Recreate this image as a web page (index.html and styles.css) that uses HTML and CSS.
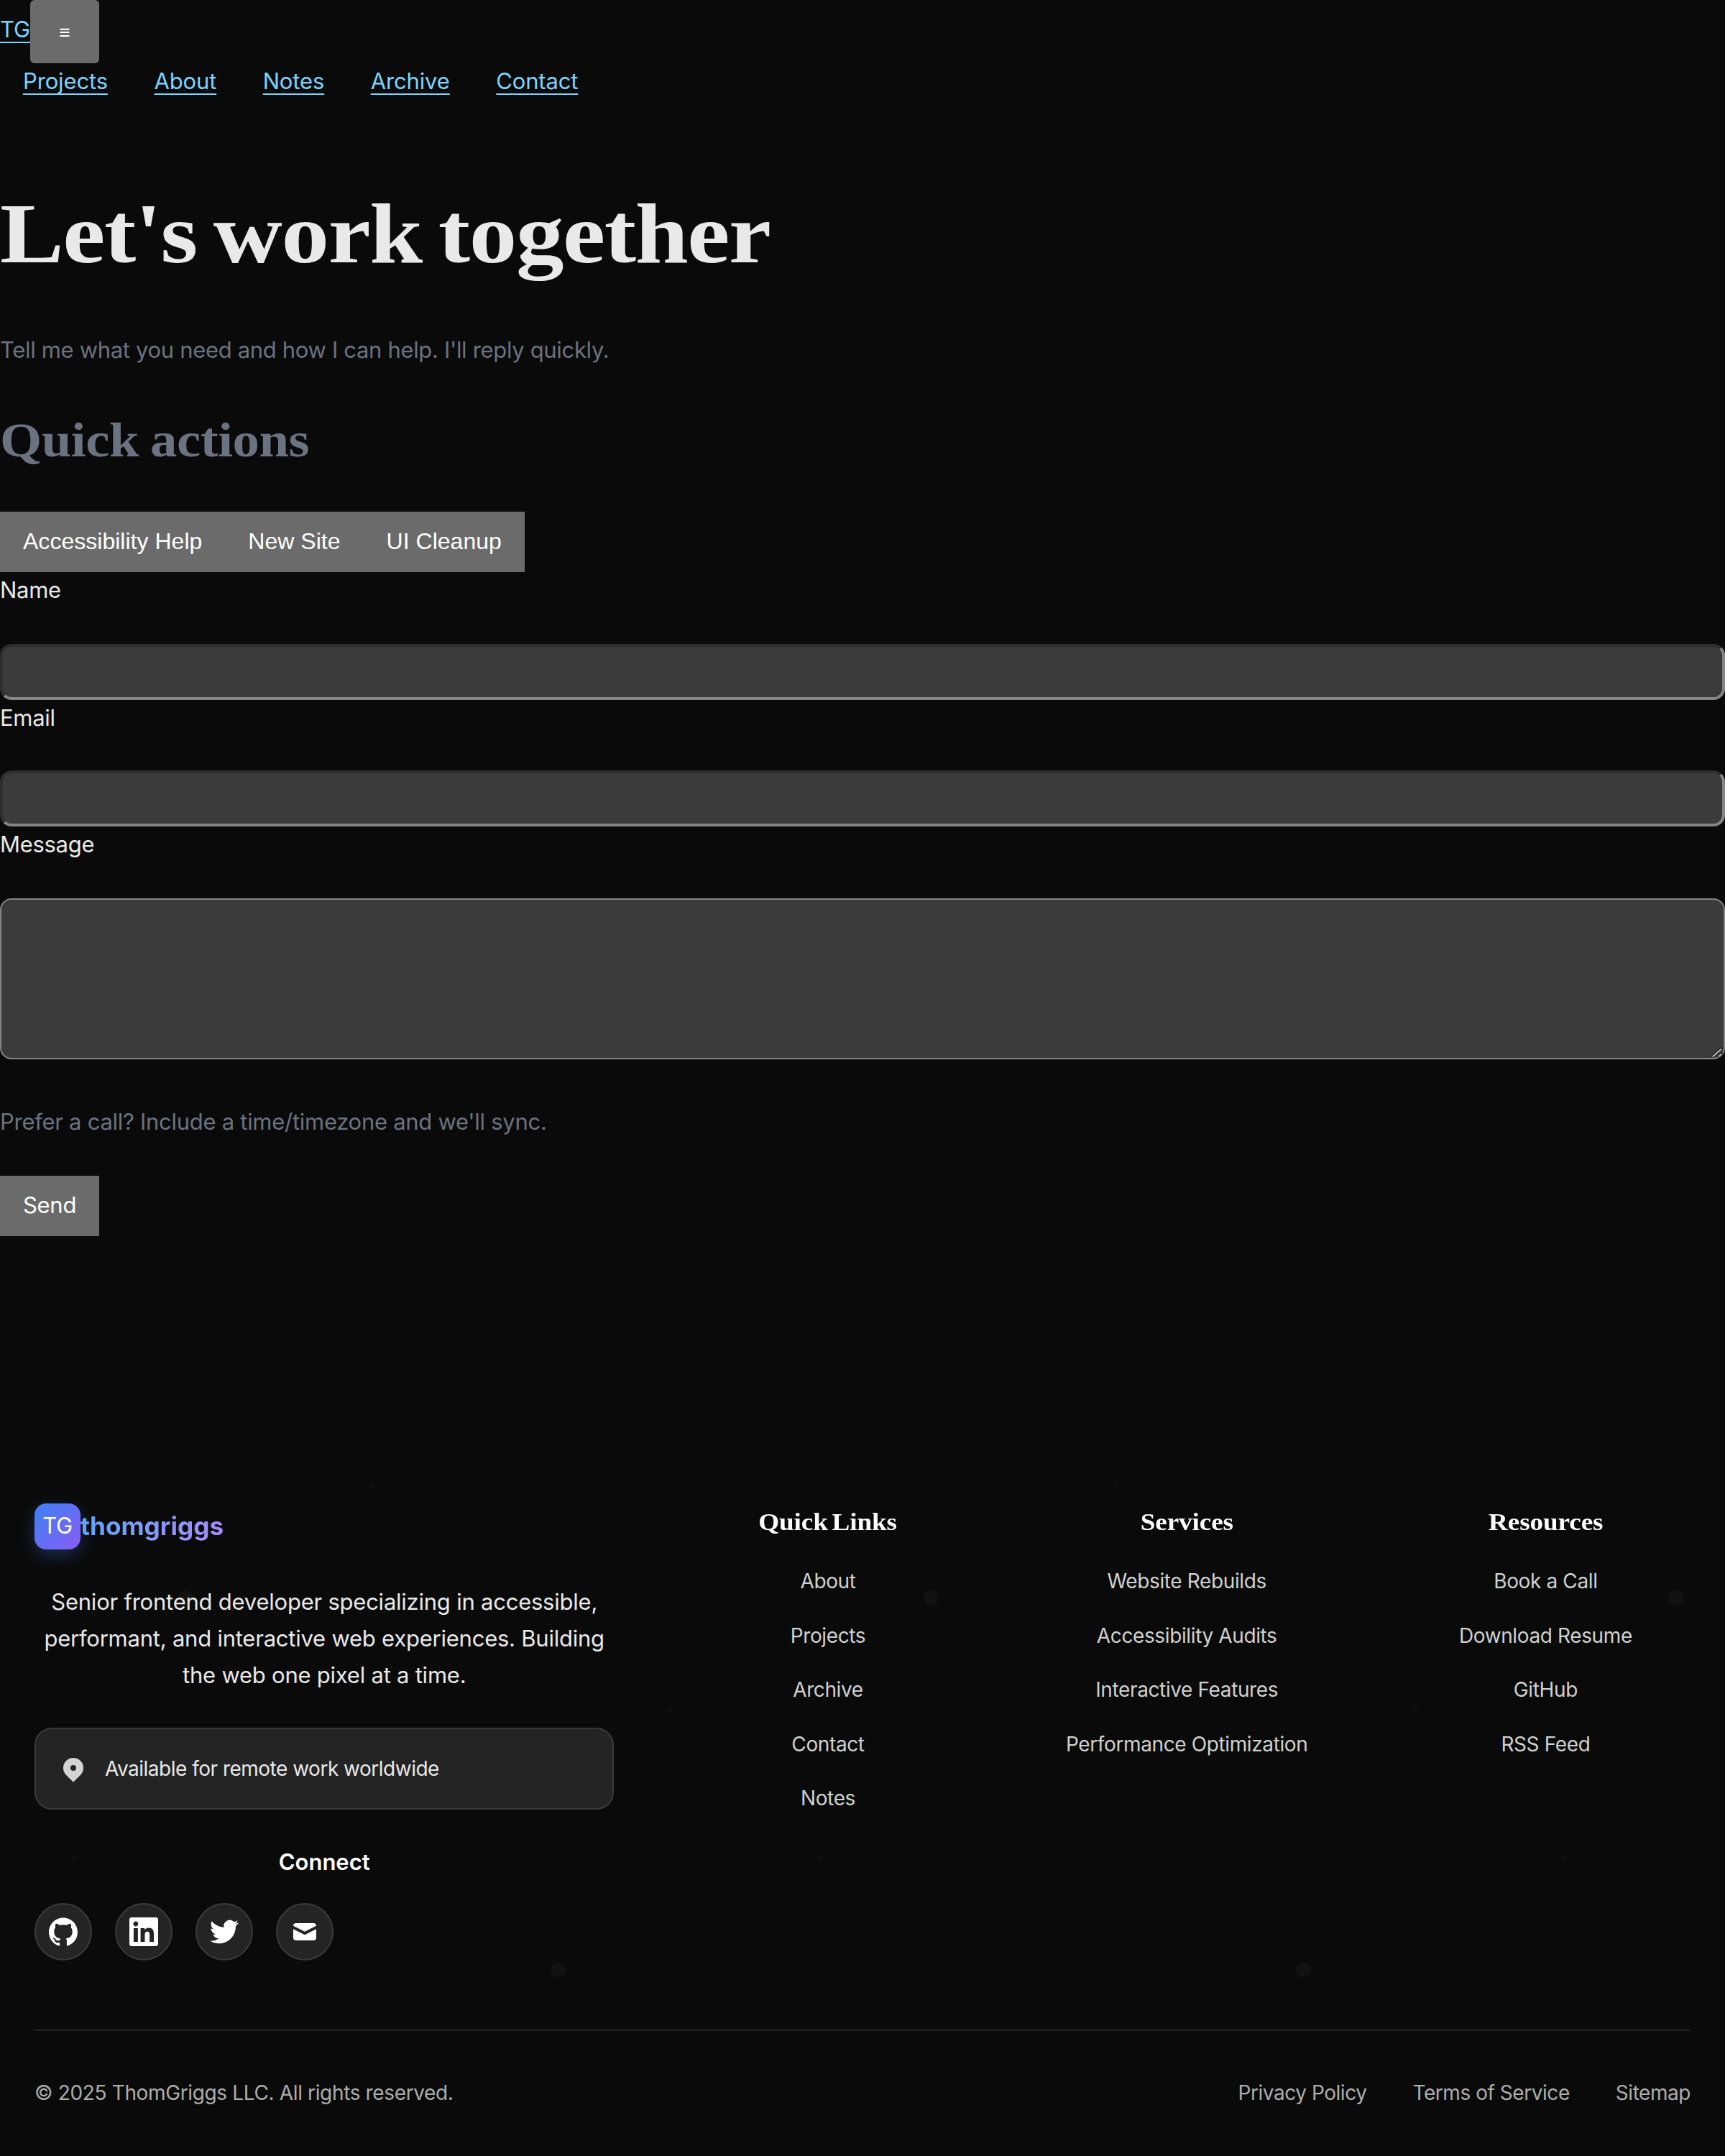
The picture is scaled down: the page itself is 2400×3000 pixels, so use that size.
FILE: index.html
```html
<!DOCTYPE html>
<html lang="en">
<head>
<meta charset="utf-8">
<title>Contact</title>
<link rel="stylesheet" href="styles.css">
</head>
<body>
<header class="header">
  <div class="brand-row">
    <a class="brand" href="#">TG</a>
    <button class="menu" type="button">≡</button>
  </div>
  <nav class="nav">
    <a href="#">Projects</a>
    <a href="#">About</a>
    <a href="#">Notes</a>
    <a href="#">Archive</a>
    <a href="#">Contact</a>
  </nav>
</header>

<main class="main">
  <h1 class="title"><span class="wide">Let's work together</span></h1>
  <p class="lead">Tell me what you need and how I can help. I'll reply quickly.</p>
  <h2 class="subtitle"><span class="wide">Quick actions</span></h2>
  <div class="actions">
    <button class="btn" type="button">Accessibility Help</button>
    <button class="btn" type="button">New Site</button>
    <button class="btn" type="button">UI Cleanup</button>
  </div>
  <form class="form">
    <label class="label" for="name">Name</label>
    <input class="input" id="name" type="text">
    <label class="label label-email" for="email">Email</label>
    <input class="input" id="email" type="email">
    <label class="label" for="message">Message</label>
    <div class="area">
      <textarea class="textarea" id="message"></textarea>
      <svg class="grip" viewBox="0 0 16 16"><path d="M1 14.500L14.500 2.500M9 15L15 9" stroke="#111" stroke-width="3.500"/><path d="M1.500 14.500L14 3.500M10 14.500L14 10.500" stroke="#c4c4c4" stroke-width="1.800"/></svg>
    </div>
    <p class="hint">Prefer a call? Include a time/timezone and we'll sync.</p>
    <button class="btn send" type="button">Send</button>
  </form>
</main>

<footer class="footer">
  <svg class="dots" width="2400" height="1037">
    <defs>
      <pattern id="grain" width="1036.400" height="1036.400" patternUnits="userSpaceOnUse">
        <g fill="#fff">
          <circle cx="259" cy="259" r="10.400" fill-opacity=".03"/>
          <circle cx="777" cy="777" r="10.400" fill-opacity=".03"/>
          <circle cx="518" cy="103.600" r="5.200" fill-opacity=".016"/>
          <circle cx="103.600" cy="621.600" r="5.200" fill-opacity=".016"/>
          <circle cx="932" cy="414.400" r="5.200" fill-opacity=".016"/>
        </g>
      </pattern>
    </defs>
    <rect width="2400" height="1036" fill="url(#grain)"/>
  </svg>
  <div class="grid">
    <section class="about">
      <div class="logo-row"><span class="logo">TG</span><span class="wordmark">thomgriggs</span></div>
      <p class="desc">Senior frontend developer specializing in accessible,<br>performant, and interactive web experiences. Building<br>the web one pixel at a time.</p>
      <div class="card">
        <svg class="pin" viewBox="0 0 20 20"><path fill="#d4d4d4" fill-rule="evenodd" d="M5.050 4.050a7 7 0 119.900 9.900L10 18.900l-4.950-4.950a7 7 0 010-9.900zM10 11a2 2 0 100-4 2 2 0 000 4z"/></svg>
        <span>Available for remote work worldwide</span>
      </div>
      <h4 class="connect">Connect</h4>
      <div class="social">
        <a href="#"><svg viewBox="0 0 24 24"><path d="M12 .297c-6.630 0-12 5.373-12 12 0 5.303 3.438 9.800 8.205 11.385.6.113.82-.258.82-.577 0-.285-.010-1.040-.015-2.040-3.338.724-4.042-1.610-4.042-1.610C4.422 18.070 3.633 17.700 3.633 17.700c-1.087-.744.084-.729.084-.729 1.205.084 1.838 1.236 1.838 1.236 1.070 1.835 2.809 1.305 3.495.998.108-.776.417-1.305.76-1.605-2.665-.3-5.466-1.332-5.466-5.930 0-1.310.465-2.380 1.235-3.220-.135-.303-.54-1.523.105-3.176 0 0 1.005-.322 3.300 1.230.96-.267 1.980-.399 3-.405 1.020.006 2.040.138 3 .405 2.280-1.552 3.285-1.230 3.285-1.230.645 1.653.24 2.873.12 3.176.765.84 1.230 1.910 1.230 3.220 0 4.610-2.805 5.625-5.475 5.920.42.36.81 1.096.81 2.220 0 1.606-.015 2.896-.015 3.286 0 .315.21.69.825.57C20.565 22.092 24 17.592 24 12.297c0-6.627-5.373-12-12-12"/></svg></a>
        <a href="#"><svg viewBox="0 0 24 24"><path d="M20.447 20.452h-3.554v-5.569c0-1.328-.027-3.037-1.852-3.037-1.853 0-2.136 1.445-2.136 2.939v5.667H9.351V9h3.414v1.561h.046c.477-.9 1.637-1.850 3.370-1.850 3.601 0 4.267 2.370 4.267 5.455v6.286zM5.337 7.433c-1.144 0-2.063-.926-2.063-2.065 0-1.138.92-2.063 2.063-2.063 1.140 0 2.064.925 2.064 2.063 0 1.139-.925 2.065-2.064 2.065zm1.782 13.019H3.555V9h3.564v11.452zM22.225 0H1.771C.792 0 0 .774 0 1.729v20.542C0 23.227.792 24 1.771 24h20.451C23.200 24 24 23.227 24 22.271V1.729C24 .774 23.200 0 22.222 0h.003z"/></svg></a>
        <a href="#"><svg viewBox="0 0 24 24"><path d="M23.953 4.570a10 10 0 01-2.825.775 4.958 4.958 0 002.163-2.723c-.951.555-2.005.959-3.127 1.184a4.920 4.920 0 00-8.384 4.482C7.690 8.095 4.067 6.130 1.640 3.162a4.822 4.822 0 00-.666 2.475c0 1.710.87 3.213 2.188 4.096a4.904 4.904 0 01-2.228-.616v.06a4.923 4.923 0 003.946 4.827 4.996 4.996 0 01-2.212.085 4.936 4.936 0 004.604 3.417 9.867 9.867 0 01-6.102 2.105c-.39 0-.779-.023-1.170-.067a13.995 13.995 0 007.557 2.209c9.053 0 13.998-7.496 13.998-13.985 0-.21 0-.42-.015-.63A9.935 9.935 0 0024 4.590z"/></svg></a>
        <a href="#"><svg viewBox="0 0 20 20"><path d="M2.003 5.884L10 9.882l7.997-3.998A2 2 0 0016 4H4a2 2 0 00-1.997 1.884z"/><path d="M18 8.118l-8 4-8-4V14a2 2 0 002 2h12a2 2 0 002-2V8.118z"/></svg></a>
      </div>
    </section>
    <section class="col">
      <h3><span class="wide">Quick Links</span></h3>
      <ul><li>About</li><li>Projects</li><li>Archive</li><li>Contact</li><li>Notes</li></ul>
    </section>
    <section class="col">
      <h3><span class="wide">Services</span></h3>
      <ul><li>Website Rebuilds</li><li>Accessibility Audits</li><li>Interactive Features</li><li>Performance Optimization</li></ul>
    </section>
    <section class="col">
      <h3><span class="wide">Resources</span></h3>
      <ul><li>Book a Call</li><li>Download Resume</li><li>GitHub</li><li>RSS Feed</li></ul>
    </section>
  </div>
  <div class="legal">
    <span class="copy">© 2025 ThomGriggs LLC. All rights reserved.</span>
    <nav class="legal-links"><a href="#">Privacy Policy</a><a href="#">Terms of Service</a><a href="#">Sitemap</a></nav>
  </div>
</footer>
</body>
</html>
```
FILE: styles.css
```css
* { box-sizing: border-box; margin: 0; padding: 0; }
body {
  width: 2400px;
  height: 3000px;
  overflow: hidden;
  background: #0a0a0a;
  color: #e9e9e9;
  font: 31px/50px Inter, sans-serif;
  letter-spacing: -.3px;
  display: flex;
  flex-direction: column;
}
a { color: inherit; text-decoration: none; }
button { border: 0; background: #6b6b6b; color: #fff; font-family: "Liberation Sans", sans-serif; }

/* header */
.header { height: 158px; flex: none; color: #7cd4fd; }
.header a { text-decoration: underline; text-decoration-thickness: 2px; text-underline-offset: 6px; }
.brand-row { display: flex; height: 88px; }
.brand { width: 42px; padding-top: 16px; letter-spacing: 0; }
.menu { width: 96px; height: 88px; border-radius: 6px; padding-top: 2px; font-size: 26.700px; }
.nav { display: flex; gap: 64.500px; padding-left: 32px; letter-spacing: -.14px; }

/* contact form */
.main { height: 1806px; flex: none; display: flex; flex-direction: column; align-items: flex-start; }
.wide { display: inline-block; transform: scaleX(1.127); transform-origin: left; }
.title { font: bold 118px/134px "Liberation Serif", serif; letter-spacing: -1.200px; word-spacing: -8px; margin-top: 101px; }
.lead { margin-top: 69px; color: #6b7280; letter-spacing: -.33px; }
.subtitle { font: bold 67px/80px "Liberation Serif", serif; letter-spacing: -.4px; word-spacing: -2px; color: #6b7280; margin-top: 60px; }
.subtitle .wide { transform: scaleX(1.116); }
.actions { display: flex; margin-top: 60px; height: 84px; }
.btn { height: 84px; padding: 0 32px 1px; font-size: 32px; letter-spacing: .02px; }
.form { width: 100%; display: flex; flex-direction: column; align-items: flex-start; }
.label { height: 100px; }
.label-email { height: 98px; }
.input { width: 100%; height: 78px; border: 4px solid; border-color: #2e2e2e #858585 #858585 #2e2e2e; border-radius: 16px; background: #3b3b3b; }
.area { position: relative; width: 100%; height: 224px; }
.textarea { display: block; width: 100%; height: 224px; border: 2px solid #858585; border-radius: 16px; background: #3b3b3b; resize: none; }
.grip { position: absolute; right: 3px; bottom: 2px; width: 16px; height: 16px; }
.hint { margin-top: 62px; color: #6b7280; letter-spacing: -.28px; }
.send { width: 138px; margin-top: 50px; padding-bottom: 4px; font-family: Inter, sans-serif; font-size: 31px; letter-spacing: -.3px; }

/* footer */
.footer { position: relative; height: 1036px; flex: none; padding: 128px 48px 0; }
.dots { position: absolute; left: 0; top: 0; }
.grid { position: relative; display: grid; grid-template-columns: 2fr 1fr 1fr 1fr; column-gap: 96px; height: 732px; }
.about { display: flex; flex-direction: column; }
.logo-row { display: flex; align-items: center; height: 64px; }
.logo { width: 64px; height: 64px; border-radius: 16px; background: linear-gradient(135deg, #3b82f6, #8b5cf6); box-shadow: 0 8px 24px rgba(59,130,246,.3); color: #fff; text-align: center; line-height: 62px; letter-spacing: -.3px; }
.wordmark { padding-bottom: 2px; font-size: 35.200px; font-weight: 700; letter-spacing: 0; background: linear-gradient(90deg, #60a5fa, #a78bfa); -webkit-background-clip: text; background-clip: text; color: transparent; }
.desc { margin-top: 47px; line-height: 51.200px; text-align: center; letter-spacing: -.23px; color: #e9e9e9; }
.card { display: flex; align-items: center; gap: 24px; height: 114px; margin-top: 47px; padding: 0 32px; border: 2px solid #3a3a3a; border-radius: 24px; background: #242424; font-size: 28px; letter-spacing: -.5px; }
.pin { width: 40px; height: 40px; position: relative; top: 1px; }
.connect { margin-top: 48px; text-align: center; font-weight: 600; color: #fff; letter-spacing: 0; }
.social { display: flex; gap: 32px; margin-top: 32px; }
.social a { width: 80px; height: 80px; border: 2px solid #3a3a3a; border-radius: 50%; background: #242424; display: flex; align-items: center; justify-content: center; }
.social svg { width: 40px; height: 40px; fill: #fff; }
.col { text-align: center; }
.col h3 { font: bold 33px/50px "Liberation Serif", serif; letter-spacing: -.1px; word-spacing: -3px; color: #fff; padding-top: 1px; }
.col .wide { transform-origin: center; }
.col ul { list-style: none; margin-top: 32px; }
.col li { height: 75.600px; font-size: 28px; letter-spacing: -.38px; color: #d0d0d0; }
.legal { position: relative; display: flex; justify-content: space-between; border-top: 2px solid #232323; padding-top: 61px; font-size: 28px; color: #adadad; letter-spacing: -.36px; }
.legal-links { display: flex; gap: 64px; letter-spacing: -.45px; }
```
